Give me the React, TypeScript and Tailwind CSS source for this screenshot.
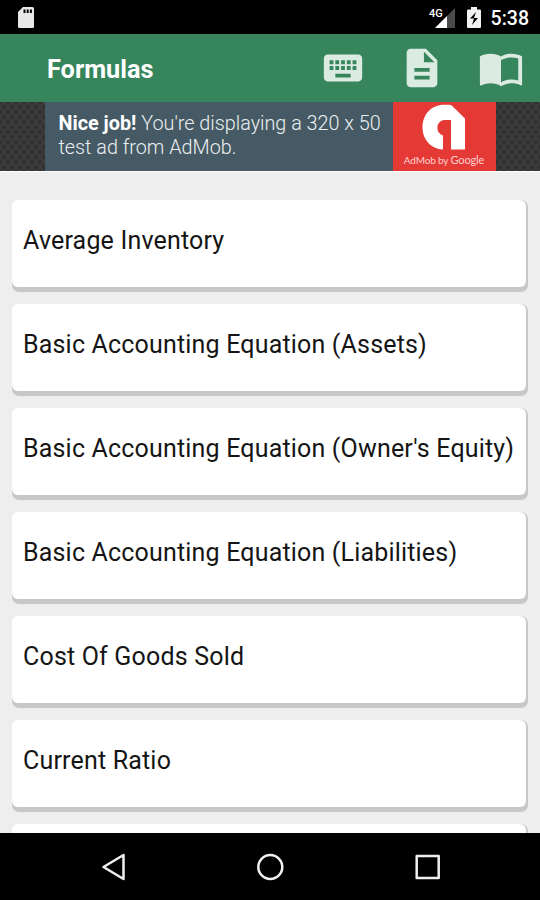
import type { ReactNode } from "react"
import { MdDescription, MdImportContacts, MdKeyboard } from "react-icons/md"

const formulas = [
  "Average Inventory",
  "Basic Accounting Equation (Assets)",
  "Basic Accounting Equation (Owner's Equity)",
  "Basic Accounting Equation (Liabilities)",
  "Cost Of Goods Sold",
  "Current Ratio",
]

function StatusBar() {
  return (
    <div className="flex h-[34px] shrink-0 items-center bg-black pl-[18px] pr-[11px] text-white">
      {/* SD card */}
      <svg className="h-[21px] w-4" viewBox="0 0 16 21">
        <path d="M5 0h9.500a1.500 1.500 0 0 1 1.500 1.500V19.500a1.500 1.500 0 0 1-1.500 1.500h-13A1.500 1.500 0 0 1 0 19.500V5z" fill="#e8e8e8" />
        <path d="M5.500 2.500h2v3.500h-2zM8.700 2.500h2v3.500h-2zM11.900 2.500h2v3.500h-2z" fill="#000" />
      </svg>
      <div className="ml-auto flex items-center">
        {/* Mobile signal */}
        <svg className="mr-3 h-[21px] w-[26px]" viewBox="0 0 26 21">
          <path d="M26 1v20H6z" fill="#4a4a4a" />
          <path d="M18 9v12H6z" fill="#fff" />
          <text x="0" y="10" fontSize="11" fontWeight="500" fill="#fff" fontFamily="Roboto, sans-serif">4G</text>
        </svg>
        {/* Charging battery */}
        <svg className="mr-[10px] h-[21px] w-[14px]" viewBox="0 0 14 21">
          <path d="M4 0h6v2.500h2.800q1.200 0 1.200 1.200V19.800q0 1.200-1.200 1.200H1.200Q0 21 0 19.800V3.700Q0 2.500 1.200 2.500H4z" fill="#f2f2f2" />
          <path d="M9 5 3 11.500h4L5 18l6-7H7z" fill="#000" />
        </svg>
        <span className="pt-[3px] text-[19.500px] font-medium leading-none">5:38</span>
      </div>
    </div>
  )
}

function AppBar() {
  return (
    <header className="flex h-[68px] shrink-0 items-center bg-[#37855c] pl-[47px] pr-4 text-white">
      <h1 className="pt-1 text-[25.300px] font-bold leading-none">Formulas</h1>
      <nav className="ml-auto flex gap-[33px] text-[#dcebe2]">
        <MdKeyboard size={46} />
        <MdDescription size={46} />
        <MdImportContacts size={46} />
      </nav>
    </header>
  )
}

function AdBanner() {
  return (
    <div className="flex h-[69px] shrink-0 bg-[#3e3c3b] bg-[radial-gradient(circle,#303030_20%,transparent_50%),radial-gradient(circle,#303030_20%,transparent_50%)] bg-[length:8px_10px] bg-[position:0_0,4px_5px] pl-[45px]">
      <div className="w-[347.500px] bg-[#455a64] pl-[13.500px] pt-[10px] text-[19.800px] font-light leading-[23.500px] text-[#eceff1]">
        <p className="whitespace-nowrap"><b className="font-bold text-white">Nice job!</b> You're displaying a 320 x 50</p>
        <p>test ad from AdMob.</p>
      </div>
      <div className="flex w-[103px] flex-col items-center bg-[#e53935] pt-0.5">
        <svg className="h-[46px] w-[44px] shrink-0" viewBox="0 0 44 46">
          <path d="M21 45.500C9 45 .5 35.500 .5 23.500 .5 10 10 .8 22 .8h5q2 0 3.500 1.400L43 14.500v31H29V16h-7a8 8 0 0 0-1 15.500z" fill="#fff" />
        </svg>
        <span className="whitespace-nowrap font-[Lato,sans-serif] text-[10px] leading-[20px] tracking-[-0.150px] text-[#ffd0ce]">
          AdMob by <span className="text-[11px]">Google</span>
        </span>
      </div>
    </div>
  )
}

function FormulaCard({ children }: { children?: ReactNode }) {
  return (
    <li className="h-[92px] shrink-0 rounded-[7px] bg-[#c8c8c8] pr-0.5">
      <div className="flex h-[87px] items-center rounded-[6px] bg-white pl-[11px] pb-[5px] text-[25px] tracking-[0.180px] text-[#151515]">
        <span className="whitespace-nowrap">{children}</span>
      </div>
    </li>
  )
}

function NavBar() {
  return (
    <div className="flex h-[67px] shrink-0 items-center justify-between bg-black px-[99px]">
      <svg className="size-7" viewBox="0 0 28 28" fill="none" stroke="#f0f0f0" strokeWidth="2.500" strokeLinejoin="round">
        <path d="M24.500 2v24L4.500 14z" />
      </svg>
      <svg className="size-7" viewBox="0 0 28 28" fill="none" stroke="#f0f0f0" strokeWidth="2.500">
        <circle cx="14.300" cy="14" r="12" />
      </svg>
      <svg className="size-7" viewBox="0 0 28 28" fill="none" stroke="#f0f0f0" strokeWidth="2.500" strokeLinejoin="round">
        <rect x="3.700" y="3" width="22" height="22" />
      </svg>
    </div>
  )
}

export default function App() {
  return (
    <div className="flex h-[900px] w-[540px] flex-col overflow-hidden bg-[#eeeeee] font-[Roboto,sans-serif]">
      <StatusBar />
      <AppBar />
      <AdBanner />
      <main className="min-h-0 flex-1 overflow-hidden border-t border-white">
        <ul className="flex flex-col gap-3 px-3 pt-7">
          {formulas.map((name) => (
            <FormulaCard key={name}>{name}</FormulaCard>
          ))}
          {/* next card peeks out above the nav bar */}
          <FormulaCard />
        </ul>
      </main>
      <NavBar />
    </div>
  )
}
